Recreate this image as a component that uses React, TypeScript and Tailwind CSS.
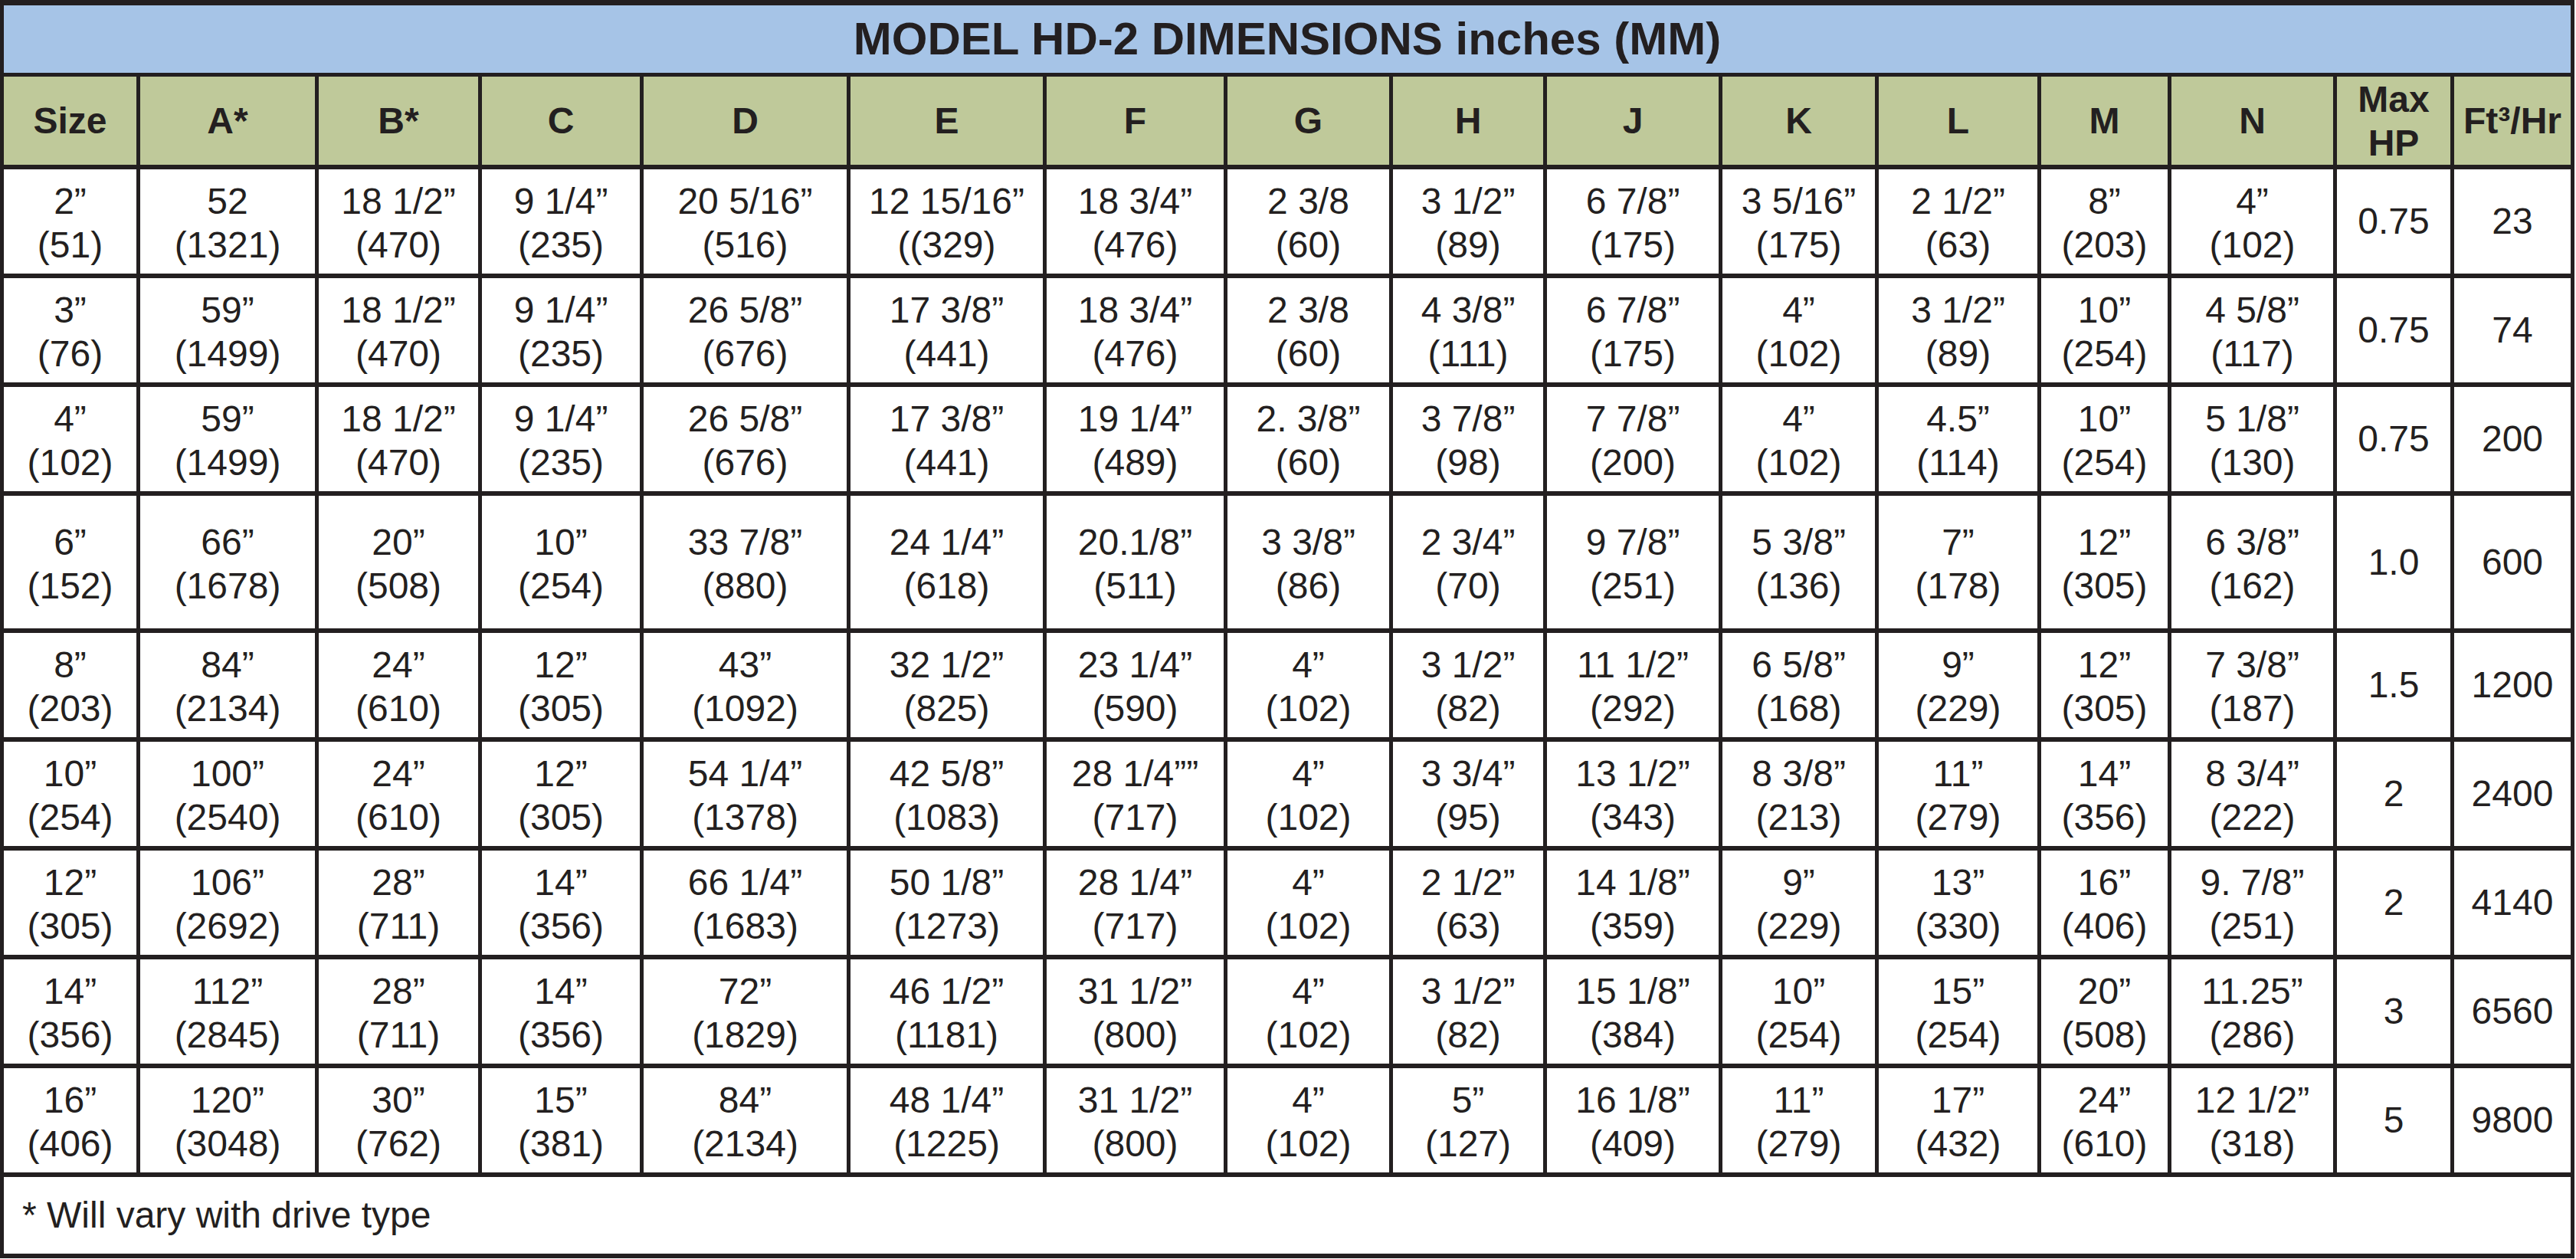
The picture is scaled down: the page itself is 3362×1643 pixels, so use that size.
const columns = ['Size', 'A*', 'B*', 'C', 'D', 'E', 'F', 'G', 'H', 'J', 'K', 'L', 'M', 'N'];

type Row = {
    pairs: [string, string][];
    hp: string;
    flow: string;
    tall?: boolean;
};

const rows: Row[] = [
    {
        pairs: [['2”', '(51)'], ['52', '(1321)'], ['18 1/2”', '(470)'], ['9 1/4”', '(235)'], ['20 5/16”', '(516)'],
            ['12 15/16”', '((329)'], ['18 3/4”', '(476)'], ['2 3/8', '(60)'], ['3 1/2”', '(89)'], ['6 7/8”', '(175)'],
            ['3 5/16”', '(175)'], ['2 1/2”', '(63)'], ['8”', '(203)'], ['4”', '(102)']],
        hp: '0.75', flow: '23'
    },
    {
        pairs: [['3”', '(76)'], ['59”', '(1499)'], ['18 1/2”', '(470)'], ['9 1/4”', '(235)'], ['26 5/8”', '(676)'],
            ['17 3/8”', '(441)'], ['18 3/4”', '(476)'], ['2 3/8', '(60)'], ['4 3/8”', '(111)'], ['6 7/8”', '(175)'],
            ['4”', '(102)'], ['3 1/2”', '(89)'], ['10”', '(254)'], ['4 5/8”', '(117)']],
        hp: '0.75', flow: '74'
    },
    {
        pairs: [['4”', '(102)'], ['59”', '(1499)'], ['18 1/2”', '(470)'], ['9 1/4”', '(235)'], ['26 5/8”', '(676)'],
            ['17 3/8”', '(441)'], ['19 1/4”', '(489)'], ['2. 3/8”', '(60)'], ['3 7/8”', '(98)'], ['7 7/8”', '(200)'],
            ['4”', '(102)'], ['4.5”', '(114)'], ['10”', '(254)'], ['5 1/8”', '(130)']],
        hp: '0.75', flow: '200'
    },
    {
        pairs: [['6”', '(152)'], ['66”', '(1678)'], ['20”', '(508)'], ['10”', '(254)'], ['33 7/8”', '(880)'],
            ['24 1/4”', '(618)'], ['20.1/8”', '(511)'], ['3 3/8”', '(86)'], ['2 3/4”', '(70)'], ['9 7/8”', '(251)'],
            ['5 3/8”', '(136)'], ['7”', '(178)'], ['12”', '(305)'], ['6 3/8”', '(162)']],
        hp: '1.0', flow: '600', tall: true
    },
    {
        pairs: [['8”', '(203)'], ['84”', '(2134)'], ['24”', '(610)'], ['12”', '(305)'], ['43”', '(1092)'],
            ['32 1/2”', '(825)'], ['23 1/4”', '(590)'], ['4”', '(102)'], ['3 1/2”', '(82)'], ['11 1/2”', '(292)'],
            ['6 5/8”', '(168)'], ['9”', '(229)'], ['12”', '(305)'], ['7 3/8”', '(187)']],
        hp: '1.5', flow: '1200'
    },
    {
        pairs: [['10”', '(254)'], ['100”', '(2540)'], ['24”', '(610)'], ['12”', '(305)'], ['54 1/4”', '(1378)'],
            ['42 5/8”', '(1083)'], ['28 1/4””', '(717)'], ['4”', '(102)'], ['3 3/4”', '(95)'], ['13 1/2”', '(343)'],
            ['8 3/8”', '(213)'], ['11”', '(279)'], ['14”', '(356)'], ['8 3/4”', '(222)']],
        hp: '2', flow: '2400'
    },
    {
        pairs: [['12”', '(305)'], ['106”', '(2692)'], ['28”', '(711)'], ['14”', '(356)'], ['66 1/4”', '(1683)'],
            ['50 1/8”', '(1273)'], ['28 1/4”', '(717)'], ['4”', '(102)'], ['2 1/2”', '(63)'], ['14 1/8”', '(359)'],
            ['9”', '(229)'], ['13”', '(330)'], ['16”', '(406)'], ['9. 7/8”', '(251)']],
        hp: '2', flow: '4140'
    },
    {
        pairs: [['14”', '(356)'], ['112”', '(2845)'], ['28”', '(711)'], ['14”', '(356)'], ['72”', '(1829)'],
            ['46 1/2”', '(1181)'], ['31 1/2”', '(800)'], ['4”', '(102)'], ['3 1/2”', '(82)'], ['15 1/8”', '(384)'],
            ['10”', '(254)'], ['15”', '(254)'], ['20”', '(508)'], ['11.25”', '(286)']],
        hp: '3', flow: '6560'
    },
    {
        pairs: [['16”', '(406)'], ['120”', '(3048)'], ['30”', '(762)'], ['15”', '(381)'], ['84”', '(2134)'],
            ['48 1/4”', '(1225)'], ['31 1/2”', '(800)'], ['4”', '(102)'], ['5”', '(127)'], ['16 1/8”', '(409)'],
            ['11”', '(279)'], ['17”', '(432)'], ['24”', '(610)'], ['12 1/2”', '(318)']],
        hp: '5', flow: '9800'
    }
];

const gridCols =
    'grid grid-cols-[173px_228px_208px_206px_265px_251px_231px_211px_196px_224px_199px_207px_165px_211px_148px_152px] gap-x-[5px]';

function App() {
    return (
        <div className="w-[3362px] h-[1643px] bg-white font-['Liberation_Sans',Arial,sans-serif] text-[#231f20]">
            <div className="w-[3360px] bg-[#231f20] px-[5px] pt-[7px] pb-[6px] flex flex-col">
                {/* Title */}
                <div className="h-[88px] bg-[#a6c4e7] flex items-center justify-center text-[60px] font-bold leading-none">
                    MODEL HD-2 DIMENSIONS inches (MM)
                </div>

                {/* Column headers */}
                <div className={`${gridCols} mt-[5px] h-[115px]`}>
                    {columns.map((c) => (
                        <div key={c} className="bg-[#bfc99a] flex items-center justify-center text-[48px] font-bold">
                            {c}
                        </div>
                    ))}
                    <div className="bg-[#bfc99a] flex items-center justify-center text-center text-[48px] font-bold leading-[57px]">
                        Max<br/>HP
                    </div>
                    <div className="bg-[#bfc99a] flex items-center justify-center text-[48px] font-bold">
                        Ft³/Hr
                    </div>
                </div>

                {/* Data rows */}
                {rows.map((row, i) => (
                    <div key={i} className={`${gridCols} mt-[6px] ${row.tall ? 'h-[173px]' : 'h-[136px]'}`}>
                        {row.pairs.map(([inch, mm], j) => (
                            <div key={j}
                                 className="bg-white flex flex-col items-center justify-center text-center text-[48px] leading-[57px] whitespace-nowrap pt-[4px]">
                                <span>{inch}</span>
                                <span>{mm}</span>
                            </div>
                        ))}
                        <div className="bg-white flex items-center justify-center text-[48px]">{row.hp}</div>
                        <div className="bg-white flex items-center justify-center text-[48px]">{row.flow}</div>
                    </div>
                ))}

                {/* Footnote */}
                <div className="mt-[6px] h-[100px] bg-white flex items-center pl-[24px] text-[48px]">
                    * Will vary with drive type
                </div>
            </div>
        </div>
    );
}

export default App;
